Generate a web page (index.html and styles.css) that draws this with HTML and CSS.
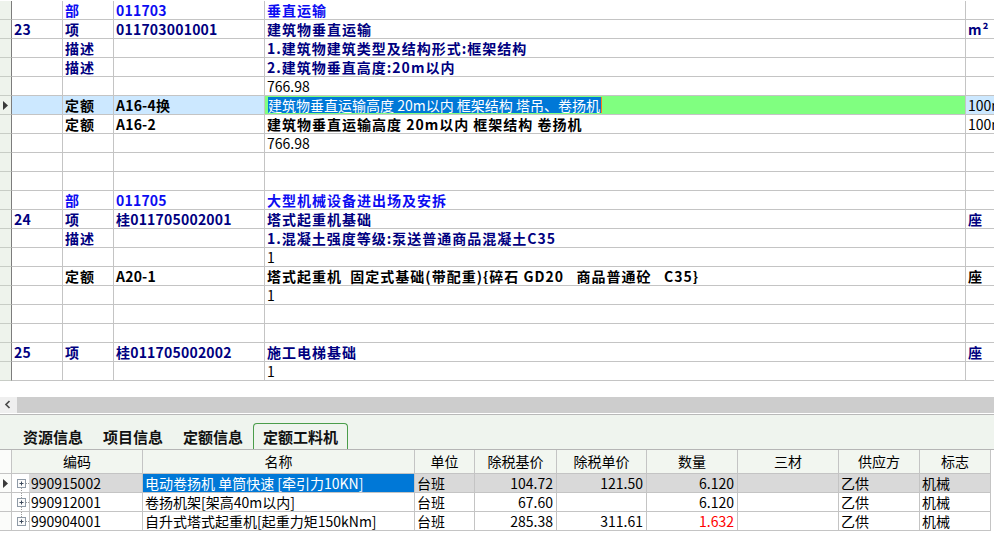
FILE: index.html
```html
<!DOCTYPE html>
<html lang="zh-CN">
<head>
<meta charset="utf-8">
<title>定额工料机</title>
<link rel="stylesheet" href="styles.css">
</head>
<body>
<div class="app">
  <div class="top">
    <div class="trow bu"><div class="rh"></div><div class="c"></div><div class="c">部</div><div class="c code">011703</div><div class="c">垂直运输</div><div class="c"></div></div>
    <div class="trow xiang"><div class="rh"></div><div class="c code">23</div><div class="c">项</div><div class="c code">011703001001</div><div class="c">建筑物垂直运输</div><div class="c">m²</div></div>
    <div class="trow xiang"><div class="rh"></div><div class="c"></div><div class="c">描述</div><div class="c"></div><div class="c">1.建筑物建筑类型及结构形式:框架结构</div><div class="c"></div></div>
    <div class="trow xiang"><div class="rh"></div><div class="c"></div><div class="c">描述</div><div class="c"></div><div class="c">2.建筑物垂直高度:20m以内</div><div class="c"></div></div>
    <div class="trow num"><div class="rh"></div><div class="c"></div><div class="c"></div><div class="c"></div><div class="c">766.98</div><div class="c"></div></div>
    <div class="trow ding sel"><div class="rh"><svg class="arrow" width="5" height="9" viewBox="0 0 5 9"><path d="M0 0L5 4.5L0 9Z" fill="#3a3a3a"/></svg></div><div class="c"></div><div class="c">定额</div><div class="c code">A16-4换</div><div class="c edit"><span class="selText">建筑物垂直运输高度 20m以内 框架结构 塔吊、卷扬机</span><span class="caret"></span></div><div class="c plain">100m³</div></div>
    <div class="trow ding"><div class="rh"></div><div class="c"></div><div class="c">定额</div><div class="c code">A16-2</div><div class="c">建筑物垂直运输高度 20m以内 框架结构 卷扬机</div><div class="c plain">100m³</div></div>
    <div class="trow num"><div class="rh"></div><div class="c"></div><div class="c"></div><div class="c"></div><div class="c">766.98</div><div class="c"></div></div>
    <div class="trow num"><div class="rh"></div><div class="c"></div><div class="c"></div><div class="c"></div><div class="c"></div><div class="c"></div></div>
    <div class="trow num"><div class="rh"></div><div class="c"></div><div class="c"></div><div class="c"></div><div class="c"></div><div class="c"></div></div>
    <div class="trow bu"><div class="rh"></div><div class="c"></div><div class="c">部</div><div class="c code">011705</div><div class="c">大型机械设备进出场及安拆</div><div class="c"></div></div>
    <div class="trow xiang"><div class="rh"></div><div class="c code">24</div><div class="c">项</div><div class="c code">桂011705002001</div><div class="c">塔式起重机基础</div><div class="c">座</div></div>
    <div class="trow xiang"><div class="rh"></div><div class="c"></div><div class="c">描述</div><div class="c"></div><div class="c">1.混凝土强度等级:泵送普通商品混凝土C35</div><div class="c"></div></div>
    <div class="trow num"><div class="rh"></div><div class="c"></div><div class="c"></div><div class="c"></div><div class="c">1</div><div class="c"></div></div>
    <div class="trow ding"><div class="rh"></div><div class="c"></div><div class="c">定额</div><div class="c code">A20-1</div><div class="c">塔式起重机  固定式基础(带配重){碎石 GD20   商品普通砼   C35}</div><div class="c">座</div></div>
    <div class="trow num"><div class="rh"></div><div class="c"></div><div class="c"></div><div class="c"></div><div class="c">1</div><div class="c"></div></div>
    <div class="trow num"><div class="rh"></div><div class="c"></div><div class="c"></div><div class="c"></div><div class="c"></div><div class="c"></div></div>
    <div class="trow num"><div class="rh"></div><div class="c"></div><div class="c"></div><div class="c"></div><div class="c"></div><div class="c"></div></div>
    <div class="trow xiang"><div class="rh"></div><div class="c code">25</div><div class="c">项</div><div class="c code">桂011705002002</div><div class="c">施工电梯基础</div><div class="c">座</div></div>
    <div class="trow num"><div class="rh"></div><div class="c"></div><div class="c"></div><div class="c"></div><div class="c">1</div><div class="c"></div></div>
  </div>

  <div class="hscroll">
    <div class="sbtn"><svg width="17" height="16" viewBox="0 0 17 16"><polyline points="9.5,4 6,7.5 9.5,11" fill="none" stroke="#4a4a4a" stroke-width="1.7"/></svg></div>
    <div class="strack"></div>
  </div>
  <div class="sep"></div>

  <div class="tabs">
    <div class="tab">资源信息</div>
    <div class="tab">项目信息</div>
    <div class="tab">定额信息</div>
    <div class="tab active">定额工料机</div>
  </div>

  <div class="bgrid">
    <div class="brow head">
      <div class="rh"></div><div class="h">编码</div><div class="h">名称</div><div class="h">单位</div><div class="h">除税基价</div><div class="h">除税单价</div><div class="h">数量</div><div class="h">三材</div><div class="h">供应方</div><div class="h">标志</div><div class="fill"></div>
    </div>
    <div class="brow cur">
      <div class="rh"><svg class="arrow" width="5" height="9" viewBox="0 0 5 9"><path d="M0 0L5 4.5L0 9Z" fill="#3a3a3a"/></svg></div>
      <div class="b code"><span class="tree"><svg width="17" height="18" viewBox="0 0 17 18"><line x1="9.5" y1="14" x2="9.5" y2="18" stroke="#9a9a9a" stroke-dasharray="1 1"/><line x1="14" y1="9.5" x2="17" y2="9.5" stroke="#9a9a9a" stroke-dasharray="1 1"/><rect x="5.5" y="5.5" width="8" height="8" fill="#fbfbfb" stroke="#8f9aa6"/><path d="M7.5 9.5H11.5M9.5 7.5V11.5" stroke="#3d4a5c"/></svg></span><span class="ctext">990915002</span></div>
      <div class="b name">电动卷扬机 单筒快速 [牵引力10KN]</div>
      <div class="b">台班</div><div class="b r">104.72</div><div class="b r">121.50</div><div class="b r">6.120</div><div class="b"></div><div class="b">乙供</div><div class="b">机械</div><div class="fill"></div>
    </div>
    <div class="brow">
      <div class="rh"></div>
      <div class="b code"><span class="tree"><svg width="17" height="18" viewBox="0 0 17 18"><line x1="9.5" y1="0" x2="9.5" y2="5" stroke="#9a9a9a" stroke-dasharray="1 1"/><line x1="9.5" y1="14" x2="9.5" y2="18" stroke="#9a9a9a" stroke-dasharray="1 1"/><line x1="14" y1="9.5" x2="17" y2="9.5" stroke="#9a9a9a" stroke-dasharray="1 1"/><rect x="5.5" y="5.5" width="8" height="8" fill="#fbfbfb" stroke="#8f9aa6"/><path d="M7.5 9.5H11.5M9.5 7.5V11.5" stroke="#3d4a5c"/></svg></span><span class="ctext">990912001</span></div>
      <div class="b">卷扬机架[架高40m以内]</div>
      <div class="b">台班</div><div class="b r">67.60</div><div class="b r"></div><div class="b r">6.120</div><div class="b"></div><div class="b">乙供</div><div class="b">机械</div><div class="fill"></div>
    </div>
    <div class="brow">
      <div class="rh"></div>
      <div class="b code"><span class="tree"><svg width="17" height="18" viewBox="0 0 17 18"><line x1="9.5" y1="0" x2="9.5" y2="5" stroke="#9a9a9a" stroke-dasharray="1 1"/><line x1="14" y1="9.5" x2="17" y2="9.5" stroke="#9a9a9a" stroke-dasharray="1 1"/><rect x="5.5" y="5.5" width="8" height="8" fill="#fbfbfb" stroke="#8f9aa6"/><path d="M7.5 9.5H11.5M9.5 7.5V11.5" stroke="#3d4a5c"/></svg></span><span class="ctext">990904001</span></div>
      <div class="b">自升式塔式起重机[起重力矩150kNm]</div>
      <div class="b">台班</div><div class="b r">285.38</div><div class="b r">311.61</div><div class="b r red">1.632</div><div class="b"></div><div class="b">乙供</div><div class="b">机械</div><div class="fill"></div>
    </div>
  </div>
</div>
</body>
</html>
```

FILE: styles.css
```css
html, body {
  margin: 0;
  padding: 0;
  background: #ffffff;
}

body {
  width: 994px;
  height: 538px;
  overflow: hidden;
  font-family: "Noto Sans CJK SC", "Noto Sans", sans-serif;
  font-size: 14px;
  color: #000;
}

.app {
  display: flex;
  flex-direction: column;
  width: 994px;
}

/* ---------- top grid ---------- */
.top {
  padding-top: 1px;
}

.trow {
  display: grid;
  grid-template-columns: 12px 51px 51px 151px 701px 1fr;
  height: 19px;
}

.trow > div {
  box-sizing: border-box;
  height: 19px;
  border-bottom: 1px solid #c4c4c4;
  border-right: 1px solid #c4c4c4;
  overflow: hidden;
  white-space: pre;
  line-height: 18px;
}

.trow > .rh {
  background: #eef3ec;
  border-right: 1px solid #7c7c7c;
  border-bottom-color: #c8cdc6;
  display: flex;
  align-items: center;
  padding-left: 3px;
}

.trow > .c {
  padding-left: 2px;
}

.trow > .c:last-child {
  border-right: none;
}

.bu .c {
  color: #0c0cf2;
  font-weight: 700;
  letter-spacing: 1px;
}

.xiang .c {
  color: #000080;
  font-weight: 700;
  letter-spacing: 1px;
}

.ding .c {
  color: #000;
  font-weight: 700;
  letter-spacing: 1px;
}

.trow .c.code {
  letter-spacing: 0.2px;
}

.num .c {
  color: #000;
  font-weight: 400;
}

.ding .c.plain {
  font-weight: 400;
  letter-spacing: 0;
}

.sel .c {
  background: #cce8ff;
}

.sel .c.edit {
  background: #80ff80;
  padding: 1px 0 1px 3px;
  display: flex;
  align-items: stretch;
  letter-spacing: 0;
  font-weight: 400;
}

.selText {
  background: #0078d7;
  color: #ffffff;
  line-height: 16px;
  height: 16px;
  padding-right: 1px;
}

.caret {
  width: 1px;
  height: 16px;
  background: #ff7a1a;
}

/* ---------- horizontal scroll ---------- */
.hscroll {
  display: flex;
  height: 16px;
  margin-top: 16px;
}

.sbtn {
  width: 17px;
  height: 16px;
  background: #efefef;
}

.sbtn svg {
  display: block;
}

.strack {
  flex: 1;
  background: #cdcdcd;
}

.sep {
  height: 1px;
  margin-top: 1px;
  background: #b9b9b9;
}

/* ---------- tabs ---------- */
.tabs {
  height: 34px;
  background: #eff4ee;
  display: flex;
  align-items: flex-end;
  padding-left: 13px;
}

.tab {
  box-sizing: border-box;
  height: 26px;
  padding: 0 10px;
  font-size: 15px;
  font-weight: 700;
  line-height: 27px;
  color: #111;
}

.tab.active {
  padding: 0 9px;
  border: 1px solid #4a9d4a;
  border-bottom: none;
  border-radius: 4px 4px 0 0;
  line-height: 26px;
}

/* ---------- bottom grid ---------- */
.bgrid {
  border-top: 1px solid #b5b5b5;
}

.brow {
  display: grid;
  grid-template-columns: 12px 131px 272px 60px 82px 90px 91px 101px 81px 71px 1fr;
  height: 19px;
}

.brow.head {
  height: 24px;
}

.brow > div {
  box-sizing: border-box;
  border-right: 1px solid #c4c4c4;
  border-bottom: 1px solid #c4c4c4;
  overflow: hidden;
  white-space: pre;
  line-height: 18px;
}

.brow > .fill {
  border-right: none;
  border-bottom: none;
}

.brow > .rh {
  background: #fbfcfa;
  display: flex;
  align-items: center;
  padding-left: 3px;
}

.head > div {
  background: #f2f6f0;
  text-align: center;
  line-height: 23px;
}

.head > .fill {
  background: #ffffff;
}

.b {
  padding-left: 2px;
}

.b.r {
  text-align: right;
  padding-left: 0;
  padding-right: 3px;
}

.b.code {
  display: flex;
  padding-left: 0;
}

.tree {
  width: 17px;
  height: 18px;
  flex: none;
  background: #ffffff;
}

.tree svg {
  display: block;
}

.ctext {
  flex: 1;
  border-left: 1px solid #c4c4c4;
  padding-left: 1px;
  height: 18px;
}

.cur .b {
  background: #d9d9d9;
}

.cur .b.code {
  background: #ffffff;
}

.cur .ctext {
  background: #d9d9d9;
  border-left-color: #d9d9d9;
}

.cur .b.name {
  background: #0078d7;
  color: #ffffff;
}

.red {
  color: #ff0000;
}
```
